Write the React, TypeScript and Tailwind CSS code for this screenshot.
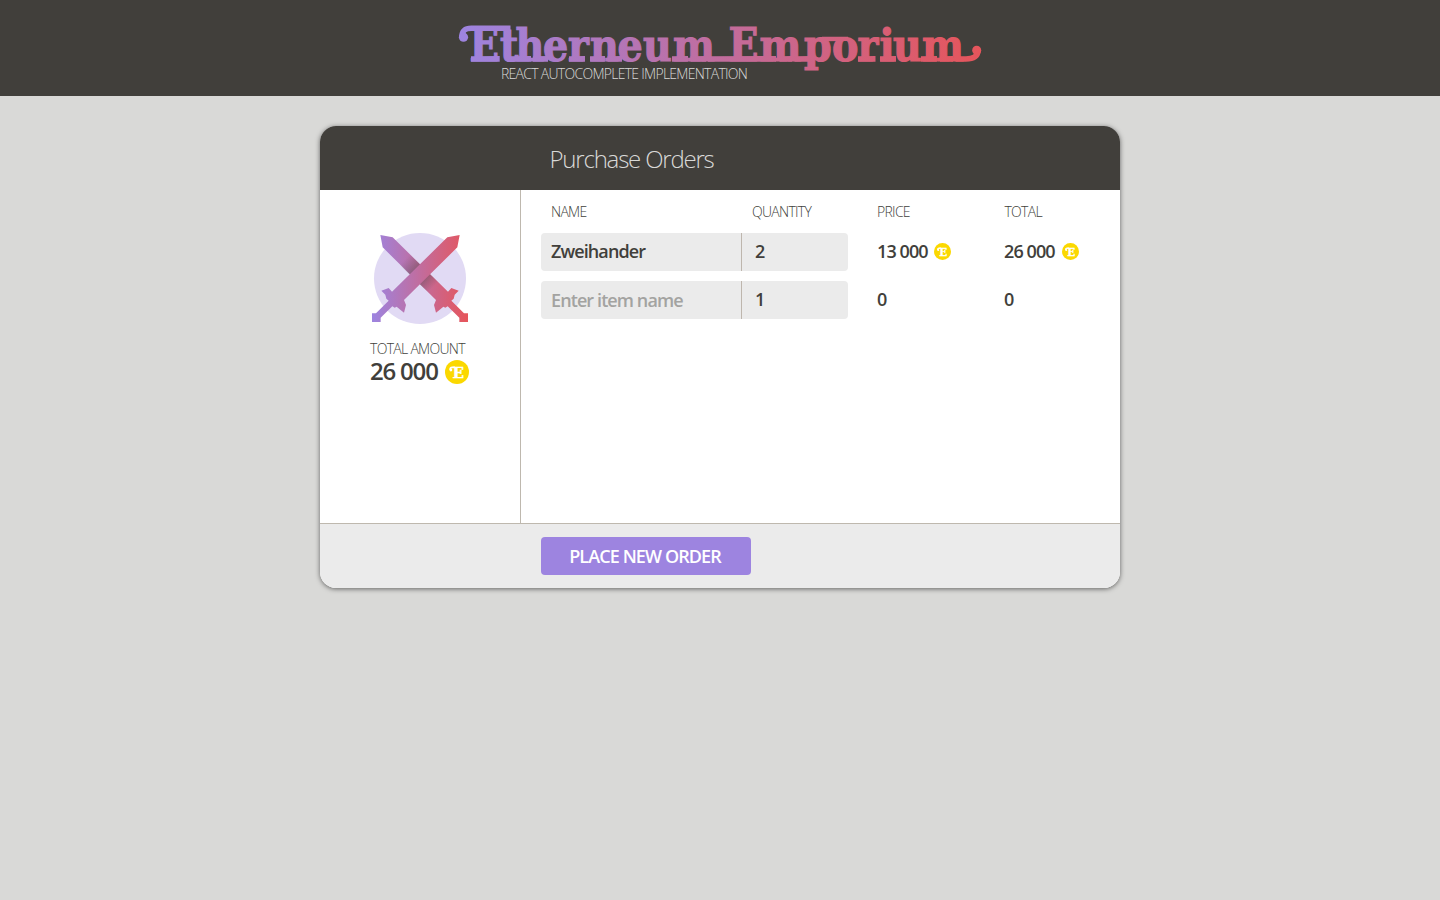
import React from "react";

const SQUEEZE = 0.89;
const at = (xs: number[]) => xs.map((x) => (x / SQUEEZE).toFixed(2)).join(" ");

function Logo() {
  return (
    <svg className="block h-[60px] w-[540px] overflow-visible" viewBox="450 20 540 60" role="img" aria-label="Etherneum Emporium">
      <defs>
        <linearGradient id="brandText" gradientUnits="userSpaceOnUse" x1={459 / SQUEEZE} x2={981 / SQUEEZE} y1="0" y2="0">
          <stop offset="0" stopColor="#9d84e0" />
          <stop offset="1" stopColor="#e6555b" />
        </linearGradient>
        <linearGradient id="brandLine" gradientUnits="userSpaceOnUse" x1="459" x2="981" y1="0" y2="0">
          <stop offset="0" stopColor="#9d84e0" />
          <stop offset="1" stopColor="#e6555b" />
        </linearGradient>
      </defs>
      <text
        y="61.2"
        transform={`scale(${SQUEEZE} 1)`}
        fill="url(#brandText)"
        stroke="url(#brandText)"
        strokeWidth="1.2"
        fontFamily="DejaVu Serif, serif"
        fontWeight="700"
        fontSize="44.5"
      >
        <tspan x={at([469.5])} fontSize="47.5" textLength={29.5 / SQUEEZE} lengthAdjust="spacingAndGlyphs">E</tspan>
        <tspan x={at([500, 515.5, 543, 568, 590, 617.5, 643, 673, 717])}>{"therneum "}</tspan>
        <tspan x={at([728.5])} fontSize="47.5" textLength={30 / SQUEEZE} lengthAdjust="spacingAndGlyphs">E</tspan>
        <tspan x={at([759.5, 804, 832, 857.5, 879.5, 893, 922])}>mporium</tspan>
      </text>
      <g fill="none" stroke="url(#brandLine)" strokeWidth="5.6">
        <path d="M510.5 28.3L472 28.2C464.5 28 462 31 461.8 37" />
        <path d="M507.3 30L507.2 42" strokeWidth="6.4" />
        <path d="M471 59L499.7 58.9M507 59L531 58.9M533 59L548 58.9M569 59L585 58.9M590 59L605 58.9M607.5 59L622 58.9M672 59L688 58.9M690.5 59L706 58.9M708 59L776 58.9M779.5 59L792 58.9M794.5 59L812 58.9M858 59L875.5 58.9M880 59L896 58.9M921 59L937 58.9M940 59L953 58.9" />
        <path d="M955.5 59H965C973 59.2 977.5 57 978.3 50.5" />
        <path d="M822 39L848 38.9" strokeWidth="4.4" />
      </g>
      <g fill="url(#brandLine)">
        <circle cx="463.5" cy="37.2" r="4.6" />
        <circle cx="976.7" cy="50.2" r="4.5" />
      </g>
    </svg>
  );
}

function Coin({ className }: { className: string }) {
  return (
    <svg className={className} viewBox="0 0 24 24" aria-hidden="true">
      <circle cx="12" cy="12" r="12" fill="#fbd800" />
      <text x="7.4" y="17.7" fill="#fff" stroke="#fff" strokeWidth="0.4" fontFamily="DejaVu Serif, serif" fontWeight="700" fontSize="15" textLength="10.3" lengthAdjust="spacingAndGlyphs">
        E
      </text>
      <path d="M10 7.3H7.3C5.6 7.3 4.9 8.3 5.3 9.8" fill="none" stroke="#fff" strokeWidth="1.8" />
      <circle cx="5.9" cy="10" r="1.4" fill="#fff" />
    </svg>
  );
}

const SWORD =
  "M299 30L262 37L96 200L86 189L64 197L76 209L79 221L86 227L82 231L48 265H36V291H62V278L97 244L104 248L110 245L119 253L132 263L138 240L132 225L292 67Z";

function Swords() {
  return (
    <svg className="h-[105px] w-[120px]" viewBox="0 0 360 315" aria-hidden="true">
      <defs>
        <linearGradient id="blade" gradientUnits="userSpaceOnUse" x1="37" x2="324" y1="0" y2="0">
          <stop offset="0" stopColor="#9d84e0" />
          <stop offset="1" stopColor="#e6555b" />
        </linearGradient>
        <linearGradient id="bladeBack" gradientUnits="userSpaceOnUse" x1="324" x2="37" y1="0" y2="0">
          <stop offset="0" stopColor="#9d84e0" />
          <stop offset="1" stopColor="#e6555b" />
        </linearGradient>
        <linearGradient id="shade" gradientUnits="userSpaceOnUse" x1="133" y1="105" x2="217" y2="189">
          <stop offset="0" stopColor="#413f3b" stopOpacity="0" />
          <stop offset="0.35" stopColor="#413f3b" stopOpacity="0.35" />
          <stop offset="0.65" stopColor="#413f3b" stopOpacity="0.4" />
          <stop offset="1" stopColor="#413f3b" stopOpacity="0" />
        </linearGradient>
      </defs>
      <ellipse cx="180" cy="160.5" rx="138" ry="136.5" fill="#e1daf4" />
      <path d={SWORD} fill="url(#bladeBack)" transform="matrix(-1 0 0 1 360 0)" />
      <path d="M149 88L238 175L206 204L119 119Z" fill="url(#shade)" />
      <path d={SWORD} fill="url(#blade)" />
    </svg>
  );
}

type Row = { name: string; quantity: string; price: string; total: string; coin: boolean };

const ROWS: Row[] = [
  { name: "Zweihander", quantity: "2", price: "13 000", total: "26 000", coin: true },
  { name: "", quantity: "1", price: "0", total: "0", coin: false },
];

function Amount({ value, coin, wide }: { value: string; coin: boolean; wide?: boolean }) {
  return (
    <div className={wide ? "flex items-center gap-[7.5px] pb-[2px]" : "flex items-center gap-[6.5px] pb-[2px]"}>
      <span>{value}</span>
      {coin && <Coin className="size-[17px]" />}
    </div>
  );
}

function OrderRow({ row }: { row: Row }) {
  return (
    <div className="grid h-[38px] grid-cols-[336px_127px_1fr] items-center text-[18px] font-semibold tracking-[-0.9px]">
      <div className="flex h-[38px] w-[307px] overflow-hidden rounded-[4px] bg-[#ebebeb]">
        <input
          className="w-[201px] border-r border-[#beb6ad] bg-transparent pb-[2px] pl-[10px] outline-none placeholder-shown:pb-0 placeholder:text-[#a3a3a1]"
          defaultValue={row.name}
          placeholder="Enter item name"
        />
        <input className="w-[106px] bg-transparent pb-[2px] pl-[13px] outline-none" defaultValue={row.quantity} />
      </div>
      <Amount value={row.price} coin={row.coin} />
      <Amount value={row.total} coin={row.coin} wide />
    </div>
  );
}

export default function App() {
  return (
    <div className="min-h-screen bg-[#d9d9d7] font-['Open_Sans',sans-serif] text-[#413f3b]">
      <header className="flex h-24 flex-col items-center bg-[#413f3b] pt-5">
        <Logo />
        <p className="-mt-[16px] w-[438px] text-[14px] leading-5 font-light tracking-[-0.72px] text-[#d9d9d7]">
          REACT AUTOCOMPLETE IMPLEMENTATION
        </p>
      </header>
      <main className="mx-auto mt-[30px] w-[800px] overflow-hidden rounded-[16px] bg-white shadow-[0_1px_5px_rgba(0,0,0,0.55)]">
        <h1 className="flex h-16 items-center bg-[#413f3b] pt-[2px] pl-[229.5px] text-[24px] font-light tracking-[-1.2px] text-[#d9d9d7]">
          Purchase Orders
        </h1>
        <div className="flex h-[333px]">
          <aside className="w-[201px] border-r border-[#beb8ae] pt-[35px]">
            <div className="pl-10">
              <Swords />
            </div>
            <div className="pt-[9px] pl-[50px]">
              <div className="text-[14px] leading-5 font-light tracking-[-0.7px]">TOTAL AMOUNT</div>
              <div className="flex h-[26px] items-center gap-[7px] text-[24px] leading-[26px] font-semibold tracking-[-1.2px]">
                <span className="pb-[2px]">26 000</span>
                <Coin className="size-6" />
              </div>
            </div>
          </aside>
          <section className="flex-1 pl-5">
            <div className="grid h-[43px] grid-cols-[201px_125px_127.5px_1fr] pt-3 pl-[10px] text-[14px] leading-5 font-light tracking-[-0.72px]">
              <span>NAME</span>
              <span>QUANTITY</span>
              <span>PRICE</span>
              <span>TOTAL</span>
            </div>
            <div className="flex flex-col gap-[10px]">
              {ROWS.map((row, i) => (
                <OrderRow key={i} row={row} />
              ))}
            </div>
          </section>
        </div>
        <footer className="flex h-[65px] border-t border-[#beb8ae] bg-[#ebebeb] pt-[13px] pl-[221px]">
          <button className="h-[38px] w-[210px] rounded-[4px] bg-[#9d84e0] pr-[2px] text-[18px] font-semibold tracking-[-0.9px] text-white">
            PLACE NEW ORDER
          </button>
        </footer>
      </main>
    </div>
  );
}
